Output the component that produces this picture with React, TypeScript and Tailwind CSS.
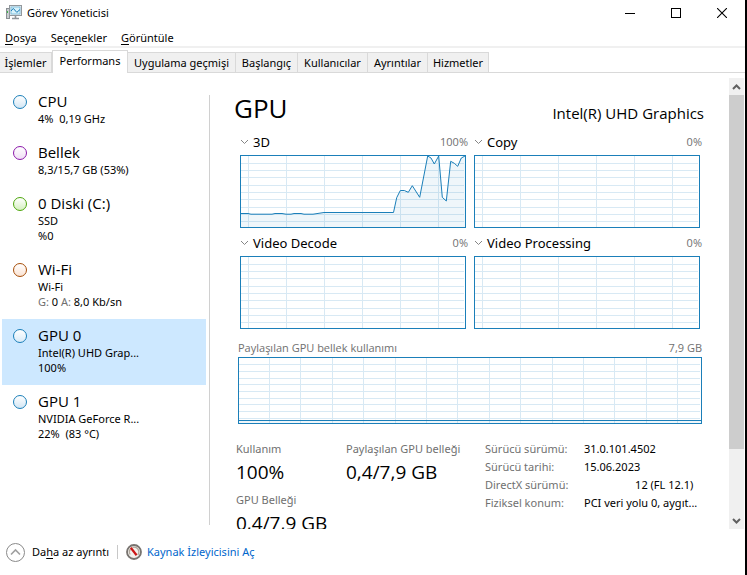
import React from "react";

const line = "#1b7fb9";
const gridLine = "#d8e9f4";

type Resource = {
  name: string;
  lines: React.ReactNode[];
  ring: string;
};

const resources: Resource[] = [
  { name: "CPU", lines: ["4%  0,19 GHz"], ring: "border-[#1b7fb9] to-[#d3e6f4]" },
  { name: "Bellek", lines: ["8,3/15,7 GB (53%)"], ring: "border-[#8c1aab] to-[#f0dff5]" },
  { name: "0 Diski (C:)", lines: ["SSD", "%0"], ring: "border-[#4da60c] to-[#d5f0c0]" },
  {
    name: "Wi-Fi",
    lines: [
      "Wi-Fi",
      <>
        <span className="text-[#707070]">G:</span> 0 <span className="text-[#707070]">A:</span> 8,0 Kb/sn
      </>,
    ],
    ring: "border-[#a74f0a] to-[#fbe3d3]",
  },
  { name: "GPU 0", lines: ["Intel(R) UHD Grap...", "100%"], ring: "border-[#1b7fb9] to-[#d9ebf8]" },
  { name: "GPU 1", lines: ["NVIDIA GeForce R...", "22%  (83 °C)"], ring: "border-[#1b7fb9] to-[#d3e6f4]" },
];

const tabs = [
  { name: "İşlemler", width: "w-[52px]" },
  { name: "Performans", width: "w-[76px]" },
  { name: "Uygulama geçmişi", width: "w-[108px]" },
  { name: "Başlangıç", width: "w-[62px]" },
  { name: "Kullanıcılar", width: "w-[70px]" },
  { name: "Ayrıntılar", width: "w-[60px]" },
  { name: "Hizmetler", width: "w-[61px]" },
];

const usage =
  "1,58.5 8,58.5 11,59.2 32,59.2 35,58.5 42,58.5 46,59.2 51,59.2 54,58.5 61,58.5 64,59.2 73,59.2 84,57.5 153.5,57.5 156.7,42.7 160.3,35.5 164.3,35.5 168.3,37.3 172.3,30.7 179.7,42.3 187.7,1 191,3 194.3,9 198.7,1 202.3,42.3 206.3,46 210.7,6.3 214.3,8.3 217.7,11.3 221.3,3 225,1";

function Chart({
  width,
  height,
  first,
  step,
  points,
  level,
  label,
  className,
}: {
  width: number;
  height: number;
  first: number;
  step: number;
  points?: string;
  level?: number;
  label: string;
  className: string;
}) {
  const columns: number[] = [];
  for (let x = first; x < width - 2; x += step) columns.push(Math.round(x) + 0.5);
  const rows = Array.from({ length: 9 }, (_, i) => Math.ceil(((i + 1) * height) / 10) + 0.5);
  return (
    <svg
      role="img"
      aria-label={label}
      viewBox={`0 0 ${width} ${height}`}
      preserveAspectRatio="none"
      className={`block w-full ${className}`}
    >
      <g stroke={gridLine} shapeRendering="crispEdges">
        {columns.map((x) => (
          <line key={x} x1={x} x2={x} y1={1} y2={height - 1} />
        ))}
        {rows.map((y) => (
          <line key={y} x1={1} x2={width - 2} y1={y} y2={y} />
        ))}
      </g>
      {points && (
        <>
          <polygon points={`${points} 225,72 1,72`} fill={line} fillOpacity={0.07} />
          <polyline points={points} fill="none" stroke={line} />
        </>
      )}
      {level && (
        <>
          <rect x={1} y={level} width={width - 2} height={height - level} fill={line} fillOpacity={0.07} />
          <line x1={0} x2={width} y1={level} y2={level} stroke={line} shapeRendering="crispEdges" />
        </>
      )}
      <rect
        x={0.5}
        y={0.5}
        width={width - 1}
        height={height - 1}
        fill="none"
        stroke={line}
        shapeRendering="crispEdges"
      />
    </svg>
  );
}

function Engine({ name, value, points }: { name: string; value: string; points?: string }) {
  return (
    <section>
      <div className="-mr-0.5 flex h-7 items-center justify-between pt-0.5">
        <button className="flex items-center gap-1 text-[13px] leading-6">
          <svg width="9" height="6" viewBox="0 0 9 6" fill="none" stroke="#858585">
            <path d="M1 1l3.5 3.5L8 1" />
          </svg>
          {name}
        </button>
        <span className="font-['Open_Sans'] text-[11px] text-[#707070]">{value}</span>
      </div>
      <Chart width={226} height={73} first={8} step={38} points={points} label={name} className="h-[73px]" />
    </section>
  );
}

function Stat({ name, value }: { name: string; value: string }) {
  return (
    <div>
      <dt className="text-[11px] leading-4 text-[#707070]">{name}</dt>
      <dd className="font-['Open_Sans'] text-[19px] leading-[30px]">{value}</dd>
    </div>
  );
}

export default function App() {
  return (
    <div className="flex h-screen flex-col overflow-hidden border-r-2 border-black bg-white font-['Noto_Sans','Open_Sans',sans-serif] text-[11px] text-black">
      <header className="flex h-[25px] shrink-0 items-center pl-1.5">
        <svg width="16" height="15" viewBox="0 0 16 15">
          <rect x="0.5" y="3.5" width="3" height="10" fill="#c9cdd0" stroke="#8a8f94" />
          <path d="M1.5 6v2" stroke="#3fb64c" />
          <rect x="3.5" y="0.5" width="12" height="10" fill="#e8ecee" stroke="#92989d" />
          <rect x="5" y="2" width="9" height="7" fill="#d8f2fb" stroke="#4ba3cf" strokeWidth="0.6" />
          <path d="M5 6l2.3-2.6 3.5 4L14 4.5" fill="none" stroke="#1679b4" />
          <path d="M9.5 11v2M6 13.5h7" stroke="#8f959a" strokeWidth="1.6" />
        </svg>
        <h1 className="ml-[5px] grow pt-0.5">Görev Yöneticisi</h1>
        <button aria-label="Simge durumuna küçült" className="flex h-full w-[46px] items-center justify-center">
          <svg width="10" height="10" viewBox="0 0 10 10" stroke="black">
            <path d="M0 5.5h10" />
          </svg>
        </button>
        <button aria-label="Ekranı kapla" className="flex h-full w-[46px] items-center justify-center">
          <svg width="10" height="10" viewBox="0 0 10 10" stroke="black" fill="none">
            <rect x="0.5" y="0.5" width="9" height="9" />
          </svg>
        </button>
        <button aria-label="Kapat" className="flex h-full w-[46px] items-center justify-center">
          <svg width="10" height="10" viewBox="0 0 10 10" stroke="black">
            <path d="M0 0l10 10M10 0L0 10" strokeWidth="1.1" />
          </svg>
        </button>
      </header>

      <nav className="flex h-[23px] shrink-0 items-center gap-3.5 border-b-2 border-[#f0f0f0] pt-1.5 pl-[5px]">
        <button><u className="underline-offset-2">D</u>osya</button>
        <button>Seçe<u className="underline-offset-2">n</u>ekler</button>
        <button><u className="underline-offset-2">G</u>örüntüle</button>
      </nav>

      <div role="tablist" className="flex h-[25px] shrink-0 items-end border-b border-[#d9d9d9]">
        {tabs.map(({ name, width }) =>
          name === "Performans" ? (
            <button
              key={name}
              role="tab"
              aria-selected
              className={`-mb-px h-[23px] border border-b-0 border-[#d9d9d9] bg-white pb-0.5 whitespace-nowrap ${width}`}
            >
              {name}
            </button>
          ) : (
            <button
              key={name}
              role="tab"
              aria-selected={false}
              className={`h-5 border-t border-r border-[#d9d9d9] bg-[#f0f0f0] pt-px whitespace-nowrap ${width}`}
            >
              {name}
            </button>
          ),
        )}
      </div>

      <div className="flex min-h-0 flex-1">
        <aside className="w-[208px] shrink-0 pt-3 pr-0.5 pl-0.5">
          {resources.map((r) => (
            <button
              key={r.name}
              className={`flex w-full items-start gap-[11px] pt-1.5 pr-2 pb-2.5 pl-[11px] text-left ${
                r.name === "GPU 0" ? "bg-[#cde8ff]" : ""
              }`}
            >
              <span className={`mt-1 size-3.5 shrink-0 rounded-full border bg-linear-to-b from-white ${r.ring}`} />
              <span className="min-w-0 whitespace-pre">
                <span className="block font-['Open_Sans'] text-[15px] leading-5">{r.name}</span>
                {r.lines.map((l, i) => (
                  <span key={i} className="block leading-[15px]">
                    {l}
                  </span>
                ))}
              </span>
            </button>
          ))}
        </aside>
        <div className="mt-[22px] mb-1 w-0.5 shrink-0 border-r border-[#d0d0d0]" />

        <main className="min-w-0 flex-1 overflow-hidden pt-4 pr-[25px] pl-6">
          <div className="flex h-[38px] items-center justify-between font-['Open_Sans']">
            <h2 className="text-[26px] leading-9">GPU</h2>
            <p className="pt-2.5 text-[15px]">Intel(R) UHD Graphics</p>
          </div>

          <div className="mr-1 ml-1.5 grid grid-cols-2 gap-x-2">
            <Engine name="3D" value="100%" points={usage} />
            <Engine name="Copy" value="0%" />
            <Engine name="Video Decode" value="0%" />
            <Engine name="Video Processing" value="0%" />
          </div>

          <section className="mr-0.5 ml-1">
            <div className="flex h-7 items-end justify-between pb-px font-['Open_Sans'] leading-4 text-[#707070]">
              <h3>Paylaşılan GPU bellek kullanımı</h3>
              <span>7,9 GB</span>
            </div>
            <Chart
              width={464}
              height={67}
              first={31}
              step={31.4}
              level={63.5}
              label="Paylaşılan GPU bellek kullanımı"
              className="h-[67px]"
            />
          </section>

          <div className="ml-0.5 flex pt-4">
            <dl className="grid w-[249px] shrink-0 grid-cols-[110px_1fr] gap-y-[5px] pt-px whitespace-nowrap">
              <Stat name="Kullanım" value="100%" />
              <Stat name="Paylaşılan GPU belleği" value="0,4/7,9 GB" />
              <Stat name="GPU Belleği" value="0,4/7,9 GB" />
            </dl>
            <dl className="grid grid-cols-[99px_auto] content-start leading-[18px] whitespace-nowrap [&>dt]:text-[#707070]">
              <dt>Sürücü sürümü:</dt>
              <dd>31.0.101.4502</dd>
              <dt>Sürücü tarihi:</dt>
              <dd>15.06.2023</dd>
              <dt>DirectX sürümü:</dt>
              <dd className="pr-1 text-right">12 (FL 12.1)</dd>
              <dt>Fiziksel konum:</dt>
              <dd>PCI veri yolu 0, aygıt...</dd>
            </dl>
          </div>
        </main>

        <div className="mt-[5px] mr-px flex w-[15px] shrink-0 flex-col bg-[#f0f0f0]">
          <button aria-label="Yukarı kaydır" className="flex h-[17px] items-center justify-center">
            <svg width="9" height="6" viewBox="0 0 9 6" fill="none" stroke="#606060" strokeWidth="2">
              <path d="M1 5l3.5-3.5L8 5" />
            </svg>
          </button>
          <div className="flex-1">
            <div className="h-[85%] bg-[#cdcdcd]" />
          </div>
          <button aria-label="Aşağı kaydır" className="flex h-[17px] items-center justify-center">
            <svg width="9" height="6" viewBox="0 0 9 6" fill="none" stroke="#606060" strokeWidth="2">
              <path d="M1 1l3.5 3.5L8 1" />
            </svg>
          </button>
        </div>
      </div>

      <footer className="flex h-[46px] shrink-0 items-center pl-1.5">
        <button className="flex items-center gap-[7px]">
          <svg width="19" height="19" viewBox="0 0 19 19" fill="none">
            <circle cx="9.5" cy="9.5" r="9" stroke="#8a8a8a" />
            <path d="M5 11.5l4.5-4.5 4.5 4.5" stroke="#a0a0a0" strokeWidth="1.6" />
          </svg>
          <span>
            Da<u className="underline-offset-2">h</u>a az ayrıntı
          </span>
        </button>
        <div className="mx-2 h-3.5 w-px bg-[#c8c8c8]" />
        <a href="#kaynak" className="flex items-center gap-[5px] text-[#0066cc]">
          <svg width="16" height="16" viewBox="0 0 16 16" fill="none">
            <circle cx="8" cy="8" r="7" fill="#f3f0ec" stroke="#77736f" strokeWidth="1.8" />
            <path d="M4.2 10.5A4.6 4.6 0 0 1 4.4 5M6.5 3.4a4.8 4.8 0 0 1 5.4 7.4" stroke="#b0a79c" strokeWidth="1.2" />
            <path d="M4.8 3.8l5.8 7.4" stroke="#cc1414" strokeWidth="2.2" />
          </svg>
          Kaynak İzleyicisini Aç
        </a>
      </footer>
    </div>
  );
}
